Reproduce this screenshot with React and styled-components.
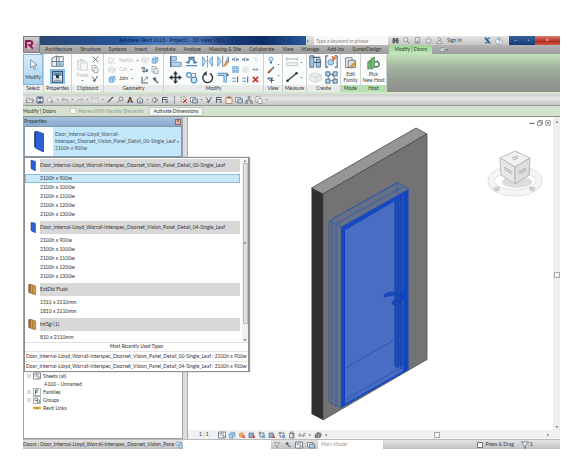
import React from "react";
import styled, { createGlobalStyle, css } from "styled-components";

const GlobalStyle = createGlobalStyle`
  * { box-sizing: border-box; }
  body { margin: 0; background: #fff; }
  body, button, input, select {
    font-family: Lato, "Open Sans", sans-serif;
    font-size: 5px;
    line-height: 7px;
    color: #333;
  }
  button { padding: 0; border: 0; background: none; }
  ul { margin: 0; padding: 0; list-style: none; }
`;

/* ---------- icon drawings, all on a 16 x 16 grid ---------- */

const blue = "#4f8dc8";
const ink = "#5b656f";
const pale = "#c9ced3";

const drawings = {
  cursor: <path d="M4 1v12l3-3 2 5 2-1-2-5h4z" fill="#fff" stroke="#6a7c8c" strokeWidth="1.2" />,
  typeProps: <><path d="M1 4l6-3v13H1z" fill="#e8edf1" stroke={ink} /><path d="M7 2h8v12H7z" fill="#fff" stroke={ink} /><path d="M1 8h14M10 2v12" stroke={ink} /><path d="M8 9h6v5H8z" fill="#8ab9de" /></>,
  properties: <><path d="M2 2h12v13H2z" fill="#fff" stroke="#39556f" strokeWidth="1.4" /><path d="M3 3h10v4H3z" fill="#5b86ab" /><path d="M6 6h4v4H6z" fill="#28394a" /><path d="M4 11h8M4 13h8" stroke="#6a8299" /></>,
  paste: <><path d="M2 3h9v11H2z" fill="#eceeef" stroke={pale} /><path d="M5 1h3v3H5z" fill={pale} /><path d="M6 6h8v9H6z" fill="#f8f8f8" stroke={pale} /></>,
  cut: <><path d="M3 3l10 10M13 3L3 13" stroke={ink} strokeWidth="2" /><path d="M1 2h4M11 2h4M1 14h4M11 14h4" stroke={ink} /></>,
  pages: <><path d="M2 1h7l2 3v8H2z" fill="#fff" stroke={ink} /><path d="M6 5h6l2 2v8H6z" fill="#eef2f5" stroke={ink} /></>,
  match: <><path d="M2 3l6 8 5-9" fill="none" stroke={ink} strokeWidth="2" /><path d="M3 10h7l-3 5z" fill="#687b8c" /></>,
  cope: <><path d="M2 2v12M5 2h3M5 14l7-12" stroke={pale} strokeWidth="2" /><path d="M9 9l5 5" stroke={pale} strokeWidth="2" /></>,
  cube: <><path d="M2 6l5-4 7 1v8l-5 4-7-1z" fill="#a8cde9" stroke={blue} /><path d="M2 6l7 1 5-4M9 7v8" fill="none" stroke={blue} /></>,
  paleCube: <><path d="M1 5l6-3 8 3v6l-6 3-8-3z" fill="#eceeef" stroke={pale} /><path d="M1 5l8 3 6-3M9 8v6" fill="none" stroke={pale} /></>,
  beam: <><path d="M2 3h5v3H2zM2 11h12M6 6v8" fill="none" stroke={ink} strokeWidth="1.6" /><path d="M9 6h5v4H9z" fill={blue} /></>,
  wallJoin: <><path d="M2 2v12h12" fill="none" stroke={ink} strokeWidth="2.4" /><path d="M5 10l8-8M9 2h4v4" fill="none" stroke={blue} strokeWidth="1.8" /></>,
  hammer: <><path d="M3 5l5-3 3 4-4 4z" fill={ink} /><path d="M8 8l6 6" stroke={ink} strokeWidth="2.4" /></>,
  align: <><path d="M2 1v14" stroke={ink} strokeWidth="1.5" /><path d="M3 2h6v5H3z" fill="#b7d4eb" stroke={blue} /><path d="M3 9h12v5H3z" fill="#b7d4eb" stroke={blue} /></>,
  offset: <><path d="M1 9h4V3h6v6h4" fill="none" stroke={ink} strokeWidth="1.4" /><path d="M1 13h14M4 11V8l4-4 4 4v3" fill="none" stroke={blue} strokeWidth="1.6" /></>,
  mirror: <><path d="M8 1v14" stroke={ink} strokeDasharray="3 1" /><path d="M2 2v12l4-6zM14 2v12l-4-6z" fill="#cae1f2" stroke={blue} /></>,
  mirrorDraw: <><path d="M7 1v14" stroke={ink} /><path d="M1 2v12l4-6zM14 2v6l-4 2z" fill="#cae1f2" stroke={blue} /><path d="M8 13l6-7 1 2-5 6z" fill="#e7a13d" stroke="#8d6534" strokeWidth=".5" /></>,
  move: <path d="M8 0l3 4H9v3h3V5l4 3-4 3V9H9v3h2l-3 4-3-4h2V9H4v2L0 8l4-3v2h3V4H5z" fill="#303840" />,
  copy: <><circle cx="5" cy="5" r="3" fill="#fff" stroke={blue} strokeWidth="1.5" /><circle cx="11" cy="11" r="3.5" fill="#d2e7f6" stroke={blue} strokeWidth="1.5" /><path d="M9 3h4v4" fill="none" stroke={ink} /></>,
  rotate: <><path d="M5 3.2A6 6 0 1 0 11 3" fill="none" stroke="#333b43" strokeWidth="1.8" /><path d="M7 0v6L3 3z" fill="#333b43" /></>,
  trim: <><path d="M1 4h9v10" fill="none" stroke={blue} strokeWidth="4" /><path d="M1 4h9v10" fill="none" stroke="#d6e9f6" strokeWidth="1.5" /><path d="M12 2l3 3-3 2" fill={ink} /></>,
  split: <><path d="M0 8h6M10 8h6" stroke={blue} strokeWidth="3" /><path d="M5 5h6v6H5z" fill="none" stroke={ink} /></>,
  paleSplit: <path d="M2 3l5 2 2 7M9 3l5 8" fill="none" stroke={pale} strokeWidth="1.6" />,
  array: <path d="M1 1h6v6H1zM9 1h6v6H9zM1 9h6v6H1zM9 9h6v6H9z" fill="#9ac6e7" stroke={blue} />,
  paleArray: <path d="M2 2h12v12H2zM2 8h12M8 2v12" fill="#f4f4f4" stroke={pale} />,
  pin: <path d="M1 8h14M5 5v6M11 5v6" stroke="#8593a0" strokeWidth="2" />,
  extend: <><path d="M1 5h8M1 12h8" stroke={blue} strokeWidth="2.5" /><path d="M13 1v14" stroke={ink} strokeWidth="2.5" /></>,
  remove: <path d="M2 2l12 12M14 2L2 14" stroke="#cf3529" strokeWidth="4" />,
  bulb: <><circle cx="8" cy="6" r="4" fill="#d5eaf8" stroke={blue} strokeWidth="1.4" /><path d="M6 11h4v4H6z" fill={ink} /></>,
  brush: <><path d="M2 14l6-6" stroke="#9c5c31" strokeWidth="4" /><path d="M8 8l6-6" stroke={ink} strokeWidth="3" /></>,
  layers: <><path d="M1 3h11v4H1z" fill="#537da3" /><path d="M5 9h9M9 6v8" stroke={ink} strokeWidth="2" /></>,
  ruler: <><path d="M1 4h14M1 2v4M15 2v4" stroke="#8b98a4" /><path d="M1 9h14v4H1z" fill="#eef1f3" stroke="#b4bec7" /></>,
  measure: <><path d="M2 13L14 3" stroke="#303840" strokeWidth="1.6" /><circle cx="2" cy="13" r="1.8" fill="#303840" /><circle cx="14" cy="3" r="1.8" fill="#303840" /></>,
  group: <><path d="M1 1h5v14H1zM9 5h5v10H9z" fill="#9fc6e5" stroke="#365d80" /><path d="M4 3h10M6 9h9" stroke={ink} strokeWidth="1.5" /></>,
  assembly: <><path d="M1 1v14h3M15 1v14h-3M1 1h3M15 1h-3" fill="none" stroke={ink} strokeWidth="1.4" /><circle cx="7" cy="9" r="3.5" fill="#a9d0ec" stroke={blue} /><path d="M8 1l6 2-4 6z" fill="#e0753b" /></>,
  similar: <><path d="M1 1h5v5H1zM10 1h5v5h-5zM1 10h5v5H1zM10 10h5v5h-5z" fill="#b2d2ea" stroke="#365d80" /><path d="M6 4h4M4 6v4M6 12h4M8 4l5 6" stroke={ink} /></>,
  edit: <><path d="M2 1h8v12H2z" fill="#fff" stroke={ink} /><path d="M5 4h9v9H5z" fill="#d7e3ec" stroke={ink} /><path d="M7 12l6-6 2 2-6 6z" fill="#e7a13d" stroke="#8d6534" strokeWidth=".5" /></>,
  host: <><path d="M1 6l3-2v10l-3 1zM5 2l4-2v13l-4 2z" fill="#7fbf73" stroke="#3d8246" /><path d="M9 6h3a3 3 0 0 1 0 6H9M13 4v3" fill="none" stroke="#55705f" strokeWidth="1.6" /></>,
  open: <path d="M1 4h6l1 2h6v7H1zM1 13l3-5h11l-2 5" fill="#eff1f3" stroke={ink} />,
  save: <><path d="M2 2h12v12H2z" fill="#dbe2ea" stroke="#3e4e64" strokeWidth="1.5" /><path d="M5 2h6v4H5zM5 10h6v4H5z" fill="#52647b" /></>,
  sync: <><circle cx="7" cy="8" r="5" fill="#e5e8eb" stroke="#8a929a" /><path d="M9 9h5v5H9z" fill="#9aa5af" /></>,
  undo: <path d="M6 3L2 7l4 4M2 7h8q4 0 4 5" fill="none" stroke="#8b939c" strokeWidth="1.6" />,
  redo: <path d="M10 3l4 4-4 4M14 7H6q-4 0-4 5" fill="none" stroke="#a5abb2" strokeWidth="1.6" />,
  pencil: <path d="M2 14l3-5 8-8 2 2-8 8z" fill={ink} />,
  tag: <><circle cx="10" cy="6" r="4" fill="none" stroke={ink} strokeWidth="1.4" /><path d="M7 9l-5 5" stroke={ink} strokeWidth="1.4" /></>,
  house: <path d="M1 8l7-5 7 5M3 7v7h10V7M8 8v6" fill="none" stroke={ink} strokeWidth="1.4" />,
  section: <><path d="M6 2l8 6-8 6" fill="none" stroke={ink} strokeWidth="1.4" /><circle cx="6" cy="8" r="3.5" fill="#eee" stroke={ink} strokeWidth="1.2" /></>,
  thin: <><path d="M3 2v12M3 3h10M3 7h10" stroke={ink} strokeWidth="2" /><path d="M9 9h5v5H9z" fill="#6996bd" /></>,
  closeHidden: <><path d="M2 2h9v9H2z" fill="#eee" stroke="#777" /><path d="M6 6l8 8M14 6l-8 8" stroke="#cf3529" strokeWidth="2" /></>,
  windows: <><path d="M1 3h10v9H1z" fill="#fff" stroke={ink} strokeWidth="1.4" /><path d="M5 6h10v8H5z" fill="#b1d0e8" stroke={ink} strokeWidth="1.4" /></>,
  clipboard: <><path d="M2 3h12v12H2z" fill="#f6ead9" stroke="#af7343" strokeWidth="1.5" /><path d="M5 1h6v4H5z" fill="#8b6a4b" /></>,
  tree: <path d="M6 1h4v4H6zM1 11h4v4H1zM11 11h4v4h-4zM8 5v4M3 11V8h10v3" fill="#adb9c4" stroke={ink} />,
  binoculars: <path d="M2 2h5v12H1V8zM9 2h5l1 6v6H9zM7 6h2v3H7z" fill="#555d66" />,
  search: <><circle cx="6" cy="6" r="4.5" fill="#f2f2f2" stroke="#656d75" strokeWidth="1.4" /><path d="M9 9l6 6" stroke="#656d75" strokeWidth="2" /></>,
  exchangeBox: <><path d="M3 1h10v10H3z" fill="#eee" stroke="#656d75" strokeWidth="1.3" /><path d="M1 14h14M8 5v6" stroke="#656d75" strokeWidth="1.3" /></>,
  star: <path d="M8 1l2 5 5 .5-4 3.5 1 5-4-3-4 3 1-5-4-3.5L6 6z" fill="#eee" stroke="#656d75" />,
  person: <><circle cx="8" cy="5" r="3" fill="#eee" stroke="#656d75" strokeWidth="1.3" /><path d="M2 15q0-6 6-6t6 6z" fill="#eee" stroke="#656d75" strokeWidth="1.3" /></>,
  exchange: <path d="M1 2h5l9 12h-5zM15 2h-5l-4 5M1 14h5l3-4" fill="#315f99" stroke="#315f99" />,
  help: <><circle cx="8" cy="8" r="7" fill="#eef4f9" stroke="#5c7a97" /><path d="M6 6q0-2 2-2t2 2-2 3M8 11v2" fill="none" stroke="#365d80" strokeWidth="1.6" /></>,
  logo: <><path d="M1 4l7-3 7 3v8l-7 3-7-3z" fill="#dcb3ca" /><path d="M3 13V3h5q4 0 4 3t-4 3l5 5" fill="none" stroke="#8b1d56" strokeWidth="3" /></>,
  door: <><path d="M5 0l6 2v14l-6-3z" fill="#2d5fd7" stroke="#163a96" strokeWidth=".6" /><path d="M5 0v13l-1-1V1z" fill="#122c6c" /></>,
  woodDoor: <><path d="M3 0l8 3v13l-8-3z" fill="#d59b4b" stroke="#80552a" strokeWidth=".8" /><path d="M3 0L1 1v11l2 1zM7 2v12" fill="#8f6c42" stroke="#80552a" strokeWidth=".8" /></>,
  sheet: <><path d="M1 2h14v12H1z" fill="#fff" stroke={ink} strokeWidth="1.5" /><path d="M10 2v12M3 5h5M3 8h5M10 10h5" stroke={ink} strokeWidth="1.3" /></>,
  family: <><path d="M1 1h14v14H1z" fill="#fff" stroke={ink} /><path d="M5 13V4h6M5 8h5" fill="none" stroke={ink} strokeWidth="2" /></>,
  groups: <><path d="M1 1h14v14H1z" fill="#fff" stroke={ink} /><path d="M4 4h5v5H4zM8 8h5v5H8z" fill="none" stroke={ink} strokeWidth="1.4" /></>,
  link: <><path d="M0 6h7v4H0zM9 6h7v4H9z" fill="#f5c949" stroke="#c69310" /><path d="M5 8h6" stroke="#936b00" strokeWidth="2" /></>,
  sun: <><circle cx="7" cy="8" r="4.5" fill="#f2b26b" stroke="#b56a37" /><path d="M9 9l5 5M14 9l-5 5" stroke="#cf3529" strokeWidth="2" /></>,
  crop: <><path d="M4 1v11h11M1 4h11v11" fill="none" stroke={ink} strokeWidth="1.6" /><path d="M8 8h6v6H8z" fill="#77add7" /></>,
  cropRed: <><path d="M2 4h9v9H2z" fill="#8fb6d5" stroke={ink} strokeWidth="1.4" /><path d="M9 9l5 5M14 9l-5 5" stroke="#cf3529" strokeWidth="2" /></>,
  lock: <><path d="M3 5h9v9H3z" fill="#e6e6e6" stroke={ink} strokeWidth="1.5" /><path d="M5 5V2h5v12" fill="none" stroke={ink} strokeWidth="1.4" /></>,
  glasses: <path d="M1 8q3-5 5 0t5 0q1-5 4-3M1 8q2 5 5 1M10 9q2 4 4-1" fill="none" stroke={ink} strokeWidth="1.5" />,
  darkCube: <><path d="M2 7l5-4 7 1v7l-5 3-7-1z" fill="#6d757d" stroke={ink} /><path d="M2 7l7 1 5-4M9 8v6" stroke="#ddd" /></>,
  filter: <path d="M1 2h14L9 9v6l-3-2V9z" fill="#eef2f5" stroke="#566879" strokeWidth="1.5" />,
  minimise: <path d="M1 9h14" stroke="#666" strokeWidth="3" />,
  restore: <path d="M5 5V1h10v10h-4M1 5h10v10H1z" fill="none" stroke="#666" strokeWidth="2" />,
  close: <path d="M2 2h12v12H2zM5 5l6 6M11 5l-6 6" fill="none" stroke="#777" strokeWidth="2" />,
  down: <path d="M2 5h12l-6 7z" fill="#6c737a" />,
  up: <path d="M2 11h12L8 4z" fill="#6c737a" />,
  left: <path d="M11 2v12L4 8z" fill="#6c737a" />,
  right: <path d="M5 2v12l7-6z" fill="#6c737a" />,
  plus: <path d="M1 1h14v14H1zM4 8h8M8 4v8" fill="#fff" stroke="#8d949b" strokeWidth="1.6" />,
};

const Svg = styled.svg`
  display: block;
  flex: none;
  width: ${(p) => p.$size}px;
  height: ${(p) => p.$size}px;
`;

function Icon({ name, size = 8 }) {
  return <Svg $size={size} viewBox="0 0 16 16" aria-hidden="true" fill="none">{drawings[name]}</Svg>;
}

const centred = css`
  display: flex;
  align-items: center;
  justify-content: center;
`;

const IconButton = styled.button`
  ${centred}
  flex: none;
`;

/* ---------- shell ---------- */

const Shell = styled.main`
  margin: 36px 25px 22px 23px;
  overflow: hidden;
  white-space: nowrap;
`;

const Header = styled.header`
  display: grid;
  grid-template-columns: 17px 1fr;
  height: 18px;
`;

const AppButton = styled.button`
  ${centred}
  gap: 1px;
  height: 17px;
  background: linear-gradient(#cfcdd0, #a699a2);
  border: 1px solid #847984;
`;

const HeaderRows = styled.div`
  min-width: 0;
  display: grid;
  grid-template-rows: 9px 9px;
`;

const TitleRow = styled.div`
  display: flex;
`;

const Title = styled.div`
  flex: 1;
  padding-left: 79px;
  line-height: 8px;
  color: #0c1f48;
  background: linear-gradient(90deg, #2c4773, #25549a 30%, #4a7abb 44%, #4a70ab 60%, #173a78 72%, #0d2d66 84%, #29569a);
`;

const InfoCenter = styled.div`
  flex: none;
  width: 203px;
  display: flex;
  align-items: center;
  gap: 4px;
  background: linear-gradient(#e6e6e6, #c5c5c5);
`;

const SearchInput = styled.input`
  width: 74px;
  height: 9px;
  padding: 0 2px;
  border: 0;
  background: #f8f8f8;
  font-style: italic;
  &::placeholder { color: #888; }
`;

const SignIn = styled.button`
  margin-right: 18px;
`;

const WindowControls = styled.div`
  flex: none;
  display: grid;
  grid-template-columns: 13px 13px 25px;
`;

const WindowButton = styled.button`
  ${centred}
  color: #fff;
  background: ${(p) => (p.$close ? "linear-gradient(#d98172, #b62e20 60%, #d15541)" : "linear-gradient(#355f98, #183d79)")};
`;

const Tabs = styled.nav`
  display: flex;
  align-items: center;
  gap: 8px;
  padding-left: 5px;
  background: linear-gradient(#b4b4b4, #9b9b9b);
`;

const Tab = styled.button`
  height: 9px;
  color: ${(p) => (p.$active ? "#29432a" : "#333")};
  ${(p) => p.$active && css`
    padding: 0 5px;
    background: linear-gradient(#9bd694, #c5e8be);
  `}
`;

const Ribbon = styled.section`
  display: flex;
  height: 40px;
  border-bottom: 2px solid #d3e6ce;
  background: linear-gradient(#bfe2b8, #9fae9b 40%, #8d8d8d);
`;

const RibbonPanel = styled.div`
  flex: none;
  width: ${(p) => p.$width}px;
  display: grid;
  grid-template-rows: 31px 7px;
  background: #fafbfb;
  border-right: 1px solid #cdd2cf;
`;

const PanelTools = styled.div`
  display: flex;
  align-items: center;
  justify-content: center;
  gap: 2px;
`;

const PanelTitle = styled.div`
  text-align: center;
  line-height: 7px;
  background: ${(p) => (p.$context ? "#b5e2ac" : "#e9ebea")};
`;

const ToolColumn = styled.div`
  display: grid;
  align-content: center;
  justify-items: center;
  gap: ${(p) => p.$gap || 1}px;
`;

const ToolGrid = styled.div`
  display: grid;
  grid-template-columns: repeat(${(p) => p.$columns}, auto);
  gap: ${(p) => p.$gap}px;
`;

const ToolButton = styled.button`
  display: flex;
  flex-direction: column;
  align-items: center;
  justify-content: center;
  gap: ${(p) => (p.$selected ? 4 : 1)}px;
  line-height: 6px;
  color: ${(p) => (p.$disabled ? "#b7b7b7" : "#444")};
  ${(p) => p.$selected && css`
    width: 20px;
    height: 31px;
    background: linear-gradient(#d6ebfa, #a9d2f1);
    border: 1px solid #87b4d6;
  `}
  ${(p) => p.$pressed && css`
    padding: 1px;
    background: #86bde5;
  `}
`;

const TextTool = styled.button`
  display: flex;
  align-items: center;
  gap: 3px;
  height: 9px;
  color: ${(p) => (p.$disabled ? "#b7b7b7" : "#444")};
`;

const QuickBar = styled.div`
  display: flex;
  align-items: center;
  gap: 2px;
  height: 12px;
  padding: 0 3px;
  background: linear-gradient(#cfcfcf, #e4e4e4 40%, #c5c5c5);
  border-bottom: 1px solid #969a95;
`;

const Separator = styled.span`
  width: 1px;
  height: 8px;
  margin: 0 3px;
  background: #999;
`;

const TextToolGlyph = styled.button`
  width: 8px;
  font-size: 8px;
  line-height: 10px;
  font-weight: 700;
`;

const OptionsBar = styled.div`
  display: flex;
  align-items: center;
  height: 11px;
  background: #d5e2d0;
  border-bottom: 1px solid #889184;
`;

const OptionsTitle = styled.span`
  width: 47px;
`;

const CheckLabel = styled.label`
  display: flex;
  align-items: center;
  gap: 2px;
  color: ${(p) => (p.$disabled ? "#969e94" : "#333")};
`;

const Checkbox = styled.input`
  appearance: none;
  width: 6px;
  height: 6px;
  margin: 0;
  background: #fff;
  border: 1px solid ${(p) => (p.disabled ? "#c8cec5" : "#777")};
`;

const ActivateButton = styled.button`
  height: 9px;
  margin-left: 6px;
  padding: 0 3px;
  background: #f5f8f4;
  border: 1px solid #c3cdbf;
`;

/* ---------- work area ---------- */

const WorkArea = styled.div`
  position: relative;
  display: grid;
  grid-template-columns: 160px 1fr;
  column-gap: 4px;
  background: #dcdcdc;
`;

const SidePanel = styled.aside`
  display: flex;
  flex-direction: column;
  background: #fff;
  border: 1px solid #9aa3ac;
  border-top: 0;
`;

const SideTitle = styled.div`
  display: flex;
  align-items: center;
  justify-content: space-between;
  height: 9px;
  padding-right: 1px;
  background: linear-gradient(#a9c2df, #89a9cd);
`;

const CloseBox = styled.button`
  ${centred}
  width: 6px;
  height: 6px;
  background: #e4b5b0;
  border: 1px solid #96635f;
`;

const TypeSelector = styled.button`
  display: grid;
  grid-template-columns: 30px 1fr 5px;
  align-items: center;
  height: 31px;
  text-align: left;
  background: #c4e8fb;
  border: 1px solid #7d9db4;
  color: #42525f;
`;

const Thumb = styled.span`
  ${centred}
  width: 28px;
  height: 29px;
  background: #fff;
`;

const TypeMenu = styled.div`
  position: absolute;
  z-index: 2;
  top: 40px;
  left: 1px;
  width: 225px;
  padding-top: 1px;
  background: #fff;
  border: 1px solid #8e8e8e;
  box-shadow: 1px 0 1px #999;
`;

const MenuBody = styled.div`
  display: grid;
  grid-template-columns: 1fr 6px;
  column-gap: 2px;
`;

const TypeGroup = styled.section`
  display: grid;
`;

const GroupTitle = styled.div`
  display: grid;
  grid-template-columns: 15px 1fr;
  align-items: center;
  height: 13px;
  background: linear-gradient(90deg, #fff 15px, #d8d8d8 15px);
`;

const GroupIcon = styled.span`
  padding-left: 3px;
`;

const TypeList = styled.ul`
  padding: 2px 0;
  ${TypeGroup}:last-child & { padding-bottom: 0; }
`;

const TypeOption = styled.button`
  display: block;
  width: 100%;
  height: 9px;
  padding-left: ${(p) => (p.$selected ? 14 : 15)}px;
  text-align: left;
  ${(p) => p.$selected && css`
    line-height: 7px;
    background: #c8e8fa;
    border: 1px solid #8fbcd8;
  `}
`;

const MenuScroll = styled.div`
  display: flex;
  flex-direction: column;
  align-items: center;
  justify-content: space-between;
  background: #f1f1f1;
`;

const MenuThumb = styled.div`
  ${centred}
  width: 5px;
  flex: 1;
  margin-bottom: 14px;
  background: #e3e3e3;
  border: 1px solid #bbb;
  color: #555;
`;

const RecentTitle = styled.div`
  height: 9px;
  text-align: center;
  font-style: italic;
  border-top: 1px solid #e0e0e0;
`;

const RecentType = styled.button`
  display: block;
  width: 100%;
  height: 10px;
  padding: 0 1px;
  text-align: left;
  border-top: 1px solid #e4e4e4;
`;

const Browser = styled.ul`
  margin-top: auto;
  height: 67px;
  padding-top: 1px;
`;

const BrowserItem = styled.li`
  display: flex;
  align-items: center;
  gap: 2px;
  height: 8px;
  padding-left: ${(p) => p.$indent || 3}px;
`;

const Viewport = styled.section`
  display: grid;
  grid-template-columns: 1fr 7px;
  grid-template-rows: auto 9px;
  min-width: 0;
  background: #fff;
  border-left: 1px solid #aaa;
`;

const Canvas = styled.div`
  position: relative;
`;

const Model = styled.svg`
  display: block;
  width: 100%;
  height: 313px;
`;

const ViewTools = styled.div`
  position: absolute;
  top: 3px;
  right: 2px;
  display: flex;
  gap: 2px;
`;

const Cube = styled.svg`
  position: absolute;
  top: 32px;
  right: 9px;
  width: 58px;
  height: 50px;
`;

const VerticalScroll = styled.div`
  display: flex;
  flex-direction: column;
  align-items: center;
  justify-content: space-between;
  padding: 3px 0 1px;
  background: #efefef;
`;

const ScrollThumb = styled.div`
  width: 6px;
  height: 6px;
  background: #f7f7f7;
  border: 1px solid #aaa;
`;

const ViewBar = styled.div`
  grid-column: 1 / -1;
  display: flex;
  align-items: center;
  gap: 2px;
  padding: 0 10px 0 11px;
  background: #f1f1f1;
`;

const Scale = styled.button`
  width: 17px;
  text-align: left;
`;

const HorizontalTrack = styled.div`
  flex: 1;
  ${centred}
`;

const StatusBar = styled.footer`
  display: grid;
  grid-template-columns: 160px 88px 47px 65px 1fr;
  height: 10px;
  background: linear-gradient(#e3e3e3, #c2c2c2);
  border-top: 1px solid #bbb;
`;

const StatusText = styled.div`
  display: flex;
  align-items: center;
  justify-content: space-between;
`;

const StatusSelect = styled.select`
  appearance: none;
  min-width: 0;
  height: 9px;
  padding: 0 3px;
  border: 0;
  border-radius: 0;
  color: #999;
  background: #fff;
`;

const StatusTools = styled.div`
  ${centred}
  gap: 4px;
`;

const StatusEnd = styled.div`
  display: flex;
  align-items: center;
  justify-content: flex-end;
  gap: 7px;
  padding-right: 27px;
`;

const FilterButton = styled.button`
  display: flex;
  align-items: center;
`;

/* ---------- data ---------- */

const tabs = ["Architecture", "Structure", "Systems", "Insert", "Annotate", "Analyze", "Massing & Site", "Collaborate", "View", "Manage", "Add-Ins", "SumerDesign"];
const widths = ["900w", "1000w", "1100w", "1200w", "1300w"].map((w) => `2100h x ${w}`);
const doorName = (n) => `Door_Internal-Lloyd_Worrall-Interspec_Doorset_Vision_Panel_Detail_${n}-Single_Leaf`;
const groups = [
  { name: doorName("00"), icon: "door", types: widths },
  { name: doorName("04"), icon: "door", types: widths },
  { name: "ExtDbl Flush", icon: "woodDoor", types: ["1510 x 2110mm", "1810 x 2110mm"] },
  { name: "IntSgl (1)", icon: "woodDoor", types: ["810 x 2110mm"] },
];
const quickTools = ["open", "save", "sync", "down", "undo", "down", "redo", "down", "ruler", "down", "pencil", "tag", "A", "house", "down", "section", "thin", "|", "closeHidden", "windows", "down", "match", "thin", "clipboard", "windows", "tree", "pages", "down"];
const viewTools = ["sheet", "cube", "sun", "cropRed", "crop", "cropRed", "crop", "lock", "glasses", "right", "darkCube", "left"];

function Tool({ icon, size, pressed }) {
  return <ToolButton $pressed={pressed} aria-label={icon}><Icon name={icon} size={size} /></ToolButton>;
}

function Panel({ title, width, context, children }) {
  return (
    <RibbonPanel $width={width}>
      <PanelTools>{children}</PanelTools>
      <PanelTitle $context={context}>{title}</PanelTitle>
    </RibbonPanel>
  );
}

function RibbonBar() {
  return (
    <Ribbon>
      <Panel title="Select" width={21}><ToolButton $selected><Icon name="cursor" size={11} />Modify</ToolButton></Panel>
      <Panel title="Properties" width={28}>
        <ToolColumn><Tool icon="typeProps" size={13} /><Tool icon="properties" size={13} pressed /></ToolColumn>
      </Panel>
      <Panel title="Clipboard" width={32}>
        <ToolButton $disabled><Icon name="paste" size={13} />Paste<Icon name="down" size={3} /></ToolButton>
        <ToolColumn $gap={2}><Tool icon="cut" size={7} /><Tool icon="pages" size={8} /><Tool icon="match" size={8} /></ToolColumn>
      </Panel>
      <Panel title="Geometry" width={60}>
        <div>
          <TextTool $disabled><Icon name="cope" />Notch<Icon name="down" size={3} /></TextTool>
          <TextTool $disabled><Icon name="paleCube" />Cut<Icon name="down" size={3} /></TextTool>
          <TextTool><Icon name="cube" />Join<Icon name="down" size={3} /></TextTool>
        </div>
        <ToolGrid $columns={2} $gap={2}>
          {["paleCube", "cube", "beam", "pages", "wallJoin", "hammer"].map((n) => <Tool key={n} icon={n} size={8} />)}
        </ToolGrid>
      </Panel>
      <Panel title="Modify" width={100}>
        <ToolGrid $columns={4} $gap={3}>
          {["align", "offset", "mirror", "mirrorDraw", "move", "copy", "rotate", "trim"].map((n) => <Tool key={n} icon={n} size={13} />)}
        </ToolGrid>
        <ToolGrid $columns={3} $gap={3}>
          {["split", "split", "paleSplit", "array", "paleArray", "pin", "extend", "extend", "remove"].map((n, i) => <Tool key={i} icon={n} size={7} />)}
        </ToolGrid>
      </Panel>
      <Panel title="View" width={19}>
        <ToolColumn $gap={2}><Tool icon="bulb" size={8} /><Tool icon="brush" size={8} /><Tool icon="layers" size={8} /></ToolColumn>
        <ToolColumn $gap={8}><Icon name="down" size={3} /><Icon name="down" size={3} /></ToolColumn>
      </Panel>
      <Panel title="Measure" width={24}>
        <ToolColumn $gap={3}><Tool icon="ruler" size={12} /><Tool icon="measure" size={12} /></ToolColumn>
        <ToolColumn $gap={12}><Icon name="down" size={3} /><Icon name="down" size={3} /></ToolColumn>
      </Panel>
      <Panel title="Create" width={34}>
        <ToolGrid $columns={2} $gap={3}>
          {["group", "assembly", "paleCube", "similar"].map((n) => <Tool key={n} icon={n} size={13} />)}
        </ToolGrid>
      </Panel>
      <Panel title="Mode" width={20} context><ToolButton><Icon name="edit" size={13} /><span>Edit<br />Family</span></ToolButton></Panel>
      <Panel title="Host" width={26} context><ToolButton><Icon name="host" size={13} /><span>Pick<br />New Host</span></ToolButton></Panel>
    </Ribbon>
  );
}

function DoorModel() {
  return (
    <Model viewBox="188 117 365 313" role="img" aria-label="Door in wall, 3D view">
      <path d="M311.5 188L416 128l11 6-104 60z" fill="#969696" stroke="#333" strokeWidth=".7" />
      <path d="M311.5 188l11.5 6v226l-11.5-6z" fill="#303030" />
      <path d="M323 194l104-60v225.500L323 420z" fill="#737373" stroke="#444" strokeWidth=".7" />
      <path d="M329 221l68-38.500 11.500 6.500L341 227v181l-12-6z" fill="#5a6c94" opacity=".55" />
      <g fill="none" stroke="#345ca8" strokeWidth=".9">
        <path d="M341 408l-12-6V221l68-38.500 11.500 6.500" />
        <path d="M332 405V219l66-36M336 406V224l68-38M329 221l12 6M397 183v10" />
      </g>
      <path d="M341 227l67.500-38v181L341 408z" fill="#1548c2" />
      <path d="M344.500 230.500L395 201v141.500l8 1V371l-58.500 33z" fill="#496dc2" />
      <path d="M395 201l9-5v170l-9 2z" fill="#2350ad" />
      <path d="M395 201v165M398 199v169M401 198v171M344.500 230.500V404M406 191v180" fill="none" stroke="#0d3ebc" strokeWidth="1" />
      <path d="M344.500 368.500l50.500-29M344.500 400l50.500-29 9-3" fill="none" stroke="#2853b5" strokeWidth=".9" />
      <path d="M405 292l-8 2-5-2q-4 0-8 3v2l9-2 5 1 7-1M392 302q2-3 5-1l3-1v3q-5 2-8 1z" fill="#184cc2" stroke="#123fa9" strokeWidth=".8" />
      <circle cx="402" cy="297" r="2.500" fill="#0f3cc0" />
    </Model>
  );
}

function ViewCube() {
  return (
    <Cube viewBox="0 0 58 50" aria-hidden="true">
      <ellipse cx="29" cy="32" rx="24" ry="12" fill="none" stroke="#d9d9d9" strokeWidth="7" />
      <ellipse cx="29" cy="32" rx="24" ry="12" fill="none" stroke="#f5f5f5" strokeWidth="5.500" />
      <ellipse cx="31" cy="33" rx="15" ry="6" fill="#ddd" />
      <path d="M7 39l6-2 1 4-4 2zM44 37l6 2-3 4-4-2z" fill="#ccc" />
      <path d="M14 9L29 2l15 7-15 9z" fill="#f1f1f1" stroke="#bbb" />
      <path d="M14 9l15 9v17l-14-9z" fill="#e7e7e7" stroke="#bbb" />
      <path d="M29 18l15-9-1 17-14 9z" fill="#dedede" stroke="#b3b3b3" />
      <path d="M26 9l6-2M27 11l5-2M18 18l8 5M18 20l8 5M33 23l7-4M33 25l7-4" stroke="#aaa" />
    </Cube>
  );
}

function TypeDropdown() {
  return (
    <TypeMenu>
      <MenuBody>
        <div>
          {groups.map((group, g) => (
            <TypeGroup key={group.name}>
              <GroupTitle><GroupIcon><Icon name={group.icon} size={11} /></GroupIcon><span>{group.name}</span></GroupTitle>
              <TypeList>
                {group.types.map((type, i) => (
                  <li key={type}><TypeOption $selected={g === 0 && i === 0}>{type}</TypeOption></li>
                ))}
              </TypeList>
            </TypeGroup>
          ))}
        </div>
        <MenuScroll>
          <Icon name="up" size={4} />
          <MenuThumb>=</MenuThumb>
          <Icon name="down" size={4} />
        </MenuScroll>
      </MenuBody>
      <RecentTitle>Most Recently Used Types</RecentTitle>
      <RecentType>{doorName("00")} : 2100h x 900w</RecentType>
      <RecentType>{doorName("04")} : 2100h x 900w</RecentType>
    </TypeMenu>
  );
}

export default function App() {
  return (
    <>
      <GlobalStyle />
      <Shell>
        <Header>
          <AppButton aria-label="Application menu"><Icon name="logo" size={11} /><Icon name="down" size={3} /></AppButton>
          <HeaderRows>
            <TitleRow>
              <Title>Autodesk Revit 2013 - Project1 - 3D View: {"{3D}"}</Title>
              <InfoCenter>
                <Icon name="right" size={4} />
                <SearchInput aria-label="Search" placeholder="Type a keyword or phrase" />
                {["binoculars", "search", "exchangeBox", "star"].map((n) => <IconButton key={n} aria-label={n}><Icon name={n} size={7} /></IconButton>)}
                <Icon name="person" size={7} />
                <SignIn>Sign In</SignIn>
                <Icon name="exchange" size={7} />
                <Icon name="help" size={8} />
              </InfoCenter>
              <WindowControls>
                <WindowButton aria-label="Minimise">–</WindowButton>
                <WindowButton aria-label="Restore">▫</WindowButton>
                <WindowButton $close aria-label="Close">×</WindowButton>
              </WindowControls>
            </TitleRow>
            <Tabs>
              {tabs.map((tab) => <Tab key={tab}>{tab}</Tab>)}
              <Tab $active>Modify | Doors</Tab>
              <IconButton aria-label="Ribbon display"><Icon name="sheet" size={5} /><Icon name="down" size={4} /></IconButton>
            </Tabs>
          </HeaderRows>
        </Header>
        <RibbonBar />
        <QuickBar>
          {quickTools.map((n, i) => {
            if (n === "A") return <TextToolGlyph key={i}>A</TextToolGlyph>;
            if (n === "|") return <Separator key={i} />;
            return <IconButton key={i} aria-label={n}><Icon name={n} size={n === "down" ? 3 : 8} /></IconButton>;
          })}
        </QuickBar>
        <OptionsBar>
          <OptionsTitle>Modify | Doors</OptionsTitle>
          <CheckLabel $disabled><Checkbox type="checkbox" disabled />Moves With Nearby Elements</CheckLabel>
          <ActivateButton>Activate Dimensions</ActivateButton>
        </OptionsBar>
        <WorkArea>
          <SidePanel>
            <SideTitle>Properties<CloseBox aria-label="Close properties">×</CloseBox></SideTitle>
            <TypeSelector>
              <Thumb><Icon name="door" size={21} /></Thumb>
              <span>Door_Internal-Lloyd_Worrall-<br />Interspec_Doorset_Vision_Panel_Detail_00-Single_Leaf<br />2100h x 900w</span>
              <Icon name="down" size={4} />
            </TypeSelector>
            <Browser>
              <BrowserItem><Icon name="plus" size={4} /><Icon name="sheet" />Sheets (all)</BrowserItem>
              <BrowserItem $indent={20}>A100 - Unnamed</BrowserItem>
              <BrowserItem><Icon name="plus" size={4} /><Icon name="family" />Families</BrowserItem>
              <BrowserItem><Icon name="plus" size={4} /><Icon name="groups" />Groups</BrowserItem>
              <BrowserItem $indent={9}><Icon name="link" />Revit Links</BrowserItem>
            </Browser>
          </SidePanel>
          <Viewport>
            <Canvas>
              <DoorModel />
              <ViewTools>
                {["minimise", "restore", "close"].map((n) => <IconButton key={n} aria-label={n}><Icon name={n} size={6} /></IconButton>)}
              </ViewTools>
              <ViewCube />
            </Canvas>
            <VerticalScroll><Icon name="up" size={4} /><ScrollThumb /><Icon name="down" size={4} /></VerticalScroll>
            <ViewBar>
              <Scale>1 : 1</Scale>
              {viewTools.map((n, i) => <IconButton key={i} aria-label={n}><Icon name={n} size={n === "left" || n === "right" ? 4 : 8} /></IconButton>)}
              <HorizontalTrack><ScrollThumb /></HorizontalTrack>
              <Icon name="right" size={4} />
            </ViewBar>
          </Viewport>
          <TypeDropdown />
        </WorkArea>
        <StatusBar>
          <StatusText><span>Doors : Door_Internal-Lloyd_Worrall-Interspec_Doorset_Vision_Pane</span><Icon name="copy" size={8} /></StatusText>
          <StatusSelect aria-label="Workset"><option></option></StatusSelect>
          <StatusTools><Icon name="filter" size={6} /><Icon name="hammer" size={7} /><Icon name="sheet" size={8} /><Icon name="windows" size={8} /></StatusTools>
          <StatusSelect aria-label="Design option"><option>Main Model</option></StatusSelect>
          <StatusEnd>
            <CheckLabel><Checkbox type="checkbox" />Press &amp; Drag</CheckLabel>
            <FilterButton><Icon name="filter" size={8} />:1</FilterButton>
          </StatusEnd>
        </StatusBar>
      </Shell>
    </>
  );
}
